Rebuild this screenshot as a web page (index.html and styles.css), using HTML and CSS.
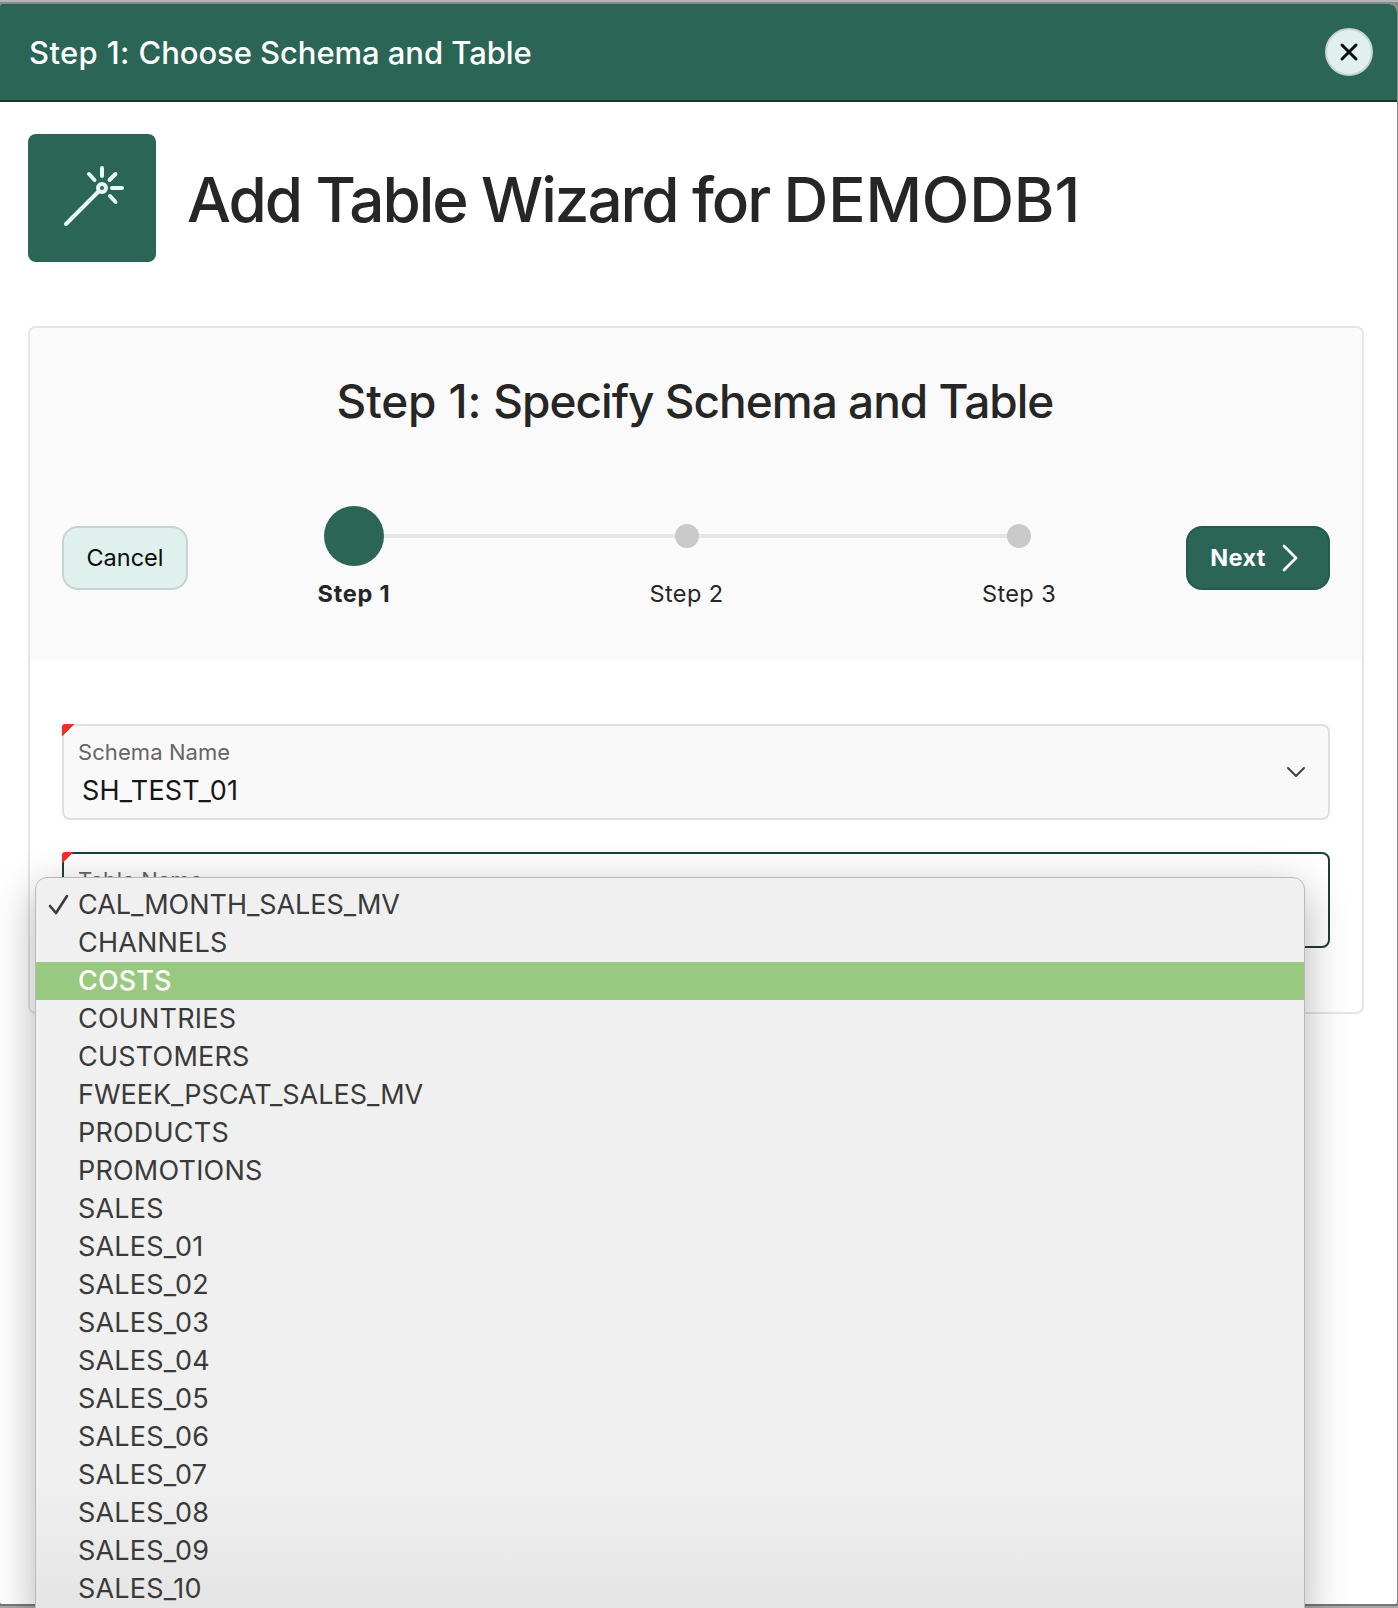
FILE: index.html
```html
<!DOCTYPE html>
<html lang="en">
<head>
<meta charset="utf-8">
<title>Add Table Wizard</title>
<link rel="stylesheet" href="styles.css">
</head>
<body>
<div class="dialog">
  <header class="dialog-bar">
    <h1 class="dialog-title"><span class="prefix">Step 1: </span>Choose Schema and Table</h1>
    <button class="close" aria-label="Close">
      <svg width="20" height="20" viewBox="0 0 20 20"><path d="M3 3 17 17M17 3 3 17"/></svg>
    </button>
  </header>
  <main class="body">
    <div class="hero">
      <div class="hero-icon">
        <svg width="128" height="128" viewBox="0 0 128 128"><circle cx="74" cy="54" r="4"/><path d="M71 57 38 90M74 34v8M84 54h10M61 40l5.500 6M87.500 40l-6 6M82 62l5.500 6"/></svg>
      </div>
      <h2 class="hero-title">Add Table Wizard for <span class="db">DEMODB1</span></h2>
    </div>
    <section class="card">
      <div class="card-head">
        <h3 class="card-title"><span class="prefix">Step 1: </span>Specify Schema and Table</h3>
        <div class="wizard">
          <button class="btn cancel">Cancel</button>
          <ol class="steps">
            <li class="step current"><span class="mark"></span><span class="step-label">Step 1</span></li>
            <li class="step"><span class="mark"></span><span class="step-label">Step 2</span></li>
            <li class="step"><span class="mark"></span><span class="step-label">Step 3</span></li>
          </ol>
          <button class="btn next"><span>Next</span>
            <svg width="16" height="28" viewBox="0 0 16 28"><path d="M2 2 14 14 2 26"/></svg>
          </button>
        </div>
      </div>
      <div class="form">
        <div class="field">
          <div class="field-text"><label>Schema Name</label><div class="value">SH_TEST_01</div></div>
          <svg class="chev" width="20" height="12" viewBox="0 0 20 12"><path d="M2 2 10 10 18 2"/></svg>
        </div>
        <div class="field focused">
          <div class="field-text"><label>Table Name</label></div>
          <svg class="chev" width="20" height="12" viewBox="0 0 20 12"><path d="M2 2 10 10 18 2"/></svg>
        </div>
      </div>
    </section>
  </main>
</div>
<ul class="menu">
  <li class="long"><svg class="check" width="22" height="22" viewBox="0 0 22 22"><path d="M2 12 8 19 19 2"/></svg>CAL_MONTH_SALES_MV</li>
  <li>CHANNELS</li>
  <li class="active">COSTS</li>
  <li>COUNTRIES</li>
  <li>CUSTOMERS</li>
  <li class="long">FWEEK_PSCAT_SALES_MV</li>
  <li>PRODUCTS</li>
  <li>PROMOTIONS</li>
  <li>SALES</li>
  <li>SALES_01</li>
  <li>SALES_02</li>
  <li>SALES_03</li>
  <li>SALES_04</li>
  <li>SALES_05</li>
  <li>SALES_06</li>
  <li>SALES_07</li>
  <li>SALES_08</li>
  <li>SALES_09</li>
  <li>SALES_10</li>
</ul>
</body>
</html>
```
FILE: styles.css
```css
* { box-sizing: border-box; margin: 0; padding: 0; }
html { height: 1608px; overflow: hidden; }
body {
  position: relative;
  width: 1398px;
  height: 1608px;
  padding: 4px 1px 4px 0;
  overflow: hidden;
  background: linear-gradient(#b5b5b5 2px, #8a8a8a 2px, #8a8a8a 1604px, #777 1604px, #777 1606px, #a8a8a8 1606px);
  font-family: Inter, "Liberation Sans", sans-serif;
  color: #262626;
}
button { font: inherit; }
svg { fill: none; stroke-linecap: round; stroke-linejoin: round; flex: none; }
.dialog { height: 1600px; background: #fff; border-radius: 2px 8px 2px 2px; overflow: hidden; }
.dialog-bar {
  height: 98px;
  display: flex;
  align-items: center;
  justify-content: space-between;
  padding: 0 24px 0 29px;
  background: #2a6556;
  border-bottom: 2px solid #1a342d;
  color: #fff;
}
.dialog-title { font-size: 31px; font-weight: 450; letter-spacing: -0.06px; line-height: 40px; padding-top: 2px; }
.dialog-title .prefix { letter-spacing: 0.38px; }
.close {
  width: 48px;
  height: 48px;
  display: grid;
  place-items: center;
  border: 2px solid #c5d3cf;
  border-radius: 50%;
  background: #e0f0ec;
}
.close svg { stroke: #0b0b0b; stroke-width: 3; }
.body { padding: 32px 33px 0 28px; }
.hero { display: flex; align-items: center; gap: 31px; height: 128px; margin-bottom: 64px; }
.hero-icon { width: 128px; height: 128px; border-radius: 8px; background: #2a6556; }
.hero-icon svg { stroke: #e6fbf6; stroke-width: 4; display: block; }
.hero-title { font-size: 62px; font-weight: 500; letter-spacing: -2.06px; line-height: 76px; padding-top: 4px; }
.hero-title .db { letter-spacing: -0.15px; }
.card { height: 688px; border: 2px solid #e5e5e5; border-radius: 8px; overflow: hidden; }
.card-head { height: 332px; padding: 41px 32px 0; background: #fafafa; }
.card-title { text-align: center; font-size: 46px; font-weight: 500; line-height: 64px; letter-spacing: -1px; padding-right: 2px; }
.card-title .prefix { letter-spacing: -0.15px; }
.wizard { display: flex; align-items: center; justify-content: space-between; margin-top: 73px; height: 104px; }
.btn {
  flex: none;
  height: 64px;
  border-radius: 16px;
  font-size: 23.5px;
  display: flex;
  align-items: center;
  justify-content: center;
  padding-bottom: 2px;
}
.cancel { width: 126px; background: #e0f0ec; border: 2px solid #c5d4cf; color: #0b0b0b; }
.next { width: 144px; gap: 16px; background: #2a6556; border: 2px solid #255a4c; color: #fff; font-weight: 700; letter-spacing: 0.4px; padding: 0 8px 0 0; }
.next span { margin-top: -2px; }
.next svg { stroke: #fff; stroke-width: 2.8; }
.steps { flex: none; display: grid; grid-template-columns: repeat(3, 332.5px); list-style: none; height: 104px; margin: 0 -1px 0 -2px; }
.step { position: relative; display: grid; grid-template-rows: 60px 1fr; place-items: center; }
.step + .step::before { content: ""; position: absolute; top: 28px; right: 50%; width: 100%; height: 4px; background: #e5e5e5; }
.mark { position: relative; z-index: 1; width: 24px; height: 24px; border-radius: 50%; background: #c9c9c9; }
.current { z-index: 2; }
.current .mark { width: 60px; height: 60px; background: #2a6556; }
.step-label { font-size: 23.5px; letter-spacing: 0.4px; line-height: 32px; padding-top: 12px; }
.current .step-label { font-weight: 700; letter-spacing: 0.8px; }
.form { display: grid; gap: 32px; padding: 64px 32px 0; }
.field {
  position: relative;
  height: 96px;
  display: flex;
  justify-content: space-between;
  align-items: center;
  padding: 0 22px 0 14px;
  border: 2px solid #dedede;
  border-radius: 8px;
  background: #f9f9f9;
}
.field::before {
  content: "";
  position: absolute;
  top: -2px;
  left: -2px;
  width: 12px;
  height: 12px;
  border-top-left-radius: 3px;
  background: linear-gradient(135deg, #ee3124 50%, transparent 50%);
}
.field.focused { border-color: #1a4235; background: #fff; }
.field-text { align-self: flex-start; padding-top: 10px; }
.field label { display: block; font-size: 22px; line-height: 32px; letter-spacing: 0.08px; color: #656565; }
.value { font-size: 27px; line-height: 36px; padding: 5px 0 0 4px; color: #161616; letter-spacing: 0.2px; }
.chev { stroke: #404040; stroke-width: 2; }
.menu {
  position: absolute;
  left: 35px;
  top: 877px;
  width: 1270px;
  height: 745px;
  padding-top: 8px;
  list-style: none;
  border: 1px solid #b9b9b9;
  border-radius: 12px;
  background: linear-gradient(#f0f0f0 600px, #e5e5e5 731px);
  box-shadow: 0 12px 44px rgba(0, 0, 0, 0.3);
  overflow: hidden;
}
.menu li {
  position: relative;
  height: 38px;
  padding-left: 42px;
  line-height: 38px;
  font-size: 27px;
  letter-spacing: 0.2px;
  color: #3a3a3a;
}
.menu .long { letter-spacing: -0.03px; }
.menu .active { background: #99c980; color: #fff; font-weight: 500; letter-spacing: 0.1px; }
.check { position: absolute; left: 12px; top: 8px; stroke: #3a3a3a; stroke-width: 2.6; }
```
